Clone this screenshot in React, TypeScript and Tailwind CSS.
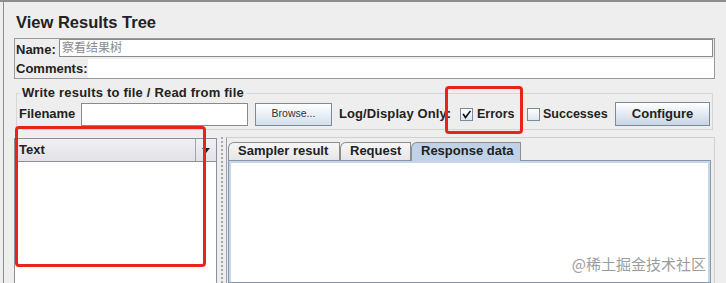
import React from "react";

function CheckBox({ checked }: { checked?: boolean }) {
  return (
    <span className="w-[13px] h-[13px] border border-[#7a8a99] bg-gradient-to-b from-[#ffffff] to-[#dfe6ee] flex items-center justify-center shrink-0">
      {checked && (
        <svg width="11" height="11" viewBox="0 0 11 11">
          <path d="M2.5 5.5 L4.5 8.5 L9 2.5" fill="none" stroke="#111" strokeWidth={1.6} strokeLinecap="square" />
        </svg>
      )}
    </span>
  );
}

function Tab({ label, width, selected }: { label: string; width: string; selected?: boolean }) {
  return (
    <div
      className={`${width} h-[18px] border border-b-0 border-[#8c8c8c] rounded-tl-[6px] pl-[9px] text-[13px] font-bold leading-[16px] text-[#222] whitespace-nowrap ${
        selected ? "bg-[#bfd2e7] h-[19px] -mb-px relative" : "bg-gradient-to-b from-[#f6f6f6] to-[#e6e6e6]"
      }`}
    >
      {label}
    </div>
  );
}

export default function App() {
  return (
    <div className="relative w-[726px] h-[283px] overflow-hidden bg-[#eeeeee] border-t-2 border-[#8e8e8e] pl-[3px] font-['Liberation_Sans','Noto_Sans_CJK_SC',sans-serif] text-[#222]">
      <div className="h-full border-l border-[#8e8e8e] pl-[10px] pr-[11px] flex flex-col">
        {/* Title */}
        <div className="h-[36px] pt-[11px] pl-[2px] text-[16.5px] leading-[19px] font-bold text-[#222]">View Results Tree</div>

        {/* Name / Comments */}
        <div className="h-[41px] border border-[#9a9a9a] flex flex-col">
          <div className="h-[20px] flex items-start">
            <span className="w-[44px] pl-[1px] pt-[1px] text-[13px] leading-[19px] font-bold">Name:</span>
            <div className="flex-1 h-[18px] mr-[1px] border border-[#8a8a8a] bg-white pl-[2px] text-[12px] leading-[16px] text-[#8a8a8a]">察看结果树</div>
          </div>
          <div className="flex-1 flex">
            <span className="w-[73px] pl-[1px] pt-[1px] text-[13px] leading-[18px] font-bold">Comments:</span>
            <div className="flex-1 bg-white" />
          </div>
        </div>

        {/* Write results to file */}
        <fieldset className="mt-[7px] mx-[2px] border border-[#d6d6d6] pb-[3px]">
          <legend className="ml-[3px] px-[2px] text-[13px] leading-[14px] font-bold tracking-[0.2px]">Write results to file / Read from file</legend>
          <div className="mt-[2px] h-[24px] flex items-center text-[13px] font-bold whitespace-nowrap">
            <span className="ml-[2px] w-[62px] shrink-0">Filename</span>
            <div className="w-[167px] h-[23px] shrink-0 border border-[#8a8a8a] bg-white" />
            <button className="ml-[7px] w-[77px] h-[23px] shrink-0 border border-[#7a8a99] bg-gradient-to-b from-[#ffffff] to-[#d3dfec] text-[10.5px] font-normal text-[#333]">
              Browse...
            </button>
            <span className="ml-[7px] w-[113px] shrink-0 tracking-[0.1px]">Log/Display Only:</span>
            <span className="ml-[8px] shrink-0">
              <CheckBox checked />
            </span>
            <span className="ml-[4px] w-[36px] shrink-0 text-[12.5px]">Errors</span>
            <span className="ml-[14px] shrink-0">
              <CheckBox />
            </span>
            <span className="ml-[3px] w-[62px] shrink-0 text-[12.5px]">Successes</span>
            <button className="ml-[10px] w-[95px] h-[24px] shrink-0 border border-[#7a8a99] bg-gradient-to-b from-[#ffffff] to-[#c7d5e5] text-[13px] font-bold text-[#222]">
              Configure
            </button>
          </div>
        </fieldset>

        {/* Split area */}
        <div className="mt-[7px] flex-1 flex">
          <div className="w-[203px] pt-[1px] flex flex-col">
            <div className="h-[24px] border border-[#8a8f9a] bg-gradient-to-b from-[#f1f1f4] to-[#e1e1e6] flex">
              <span className="flex-1 pl-[4px] text-[13px] leading-[22px] font-bold">Text</span>
              <div className="w-[21px] border-l border-[#a0a4ad] flex items-center justify-center">
                <svg width="8" height="5" viewBox="0 0 8 5">
                  <path d="M0 0 H8 L4 5 Z" fill="#222" />
                </svg>
              </div>
            </div>
            <div className="flex-1 bg-white border-x border-[#8a90a0]" />
          </div>

          <div className="w-[9px] flex justify-center">
            <div className="w-0 h-full border-l-2 border-dotted border-[#a8a8a8]" />
          </div>

          <div className="flex-1 border-t border-r border-[#d0d0d0] border-l border-l-[#9aa0ac] pl-[1px] pr-[3px] pt-[4px] flex flex-col">
            <div className="flex items-end">
              <Tab label="Sampler result" width="w-[112px]" />
              <Tab label="Request" width="w-[71px]" />
              <Tab label="Response data" width="w-[110px]" selected />
            </div>
            <div className="flex-1 border border-[#8796aa] bg-[#c5d6e8] pt-[2px] px-[2px]">
              <div className="h-full bg-white" />
            </div>
          </div>
        </div>
      </div>

      {/* annotations */}
      <div className="absolute left-[445px] top-[84px] w-[78px] h-[48px] border-[3px] border-[#e8231a] rounded-[4px]" />
      <div className="absolute left-[15px] top-[124px] w-[191px] h-[141px] border-[3px] border-[#e8231a] rounded-[4px]" />
      <div className="absolute right-[20px] bottom-[9px] text-[15px] leading-[20px] text-[#9c9c9c] font-['Noto_Sans_CJK_SC',sans-serif]">@稀土掘金技术社区</div>
    </div>
  );
}
